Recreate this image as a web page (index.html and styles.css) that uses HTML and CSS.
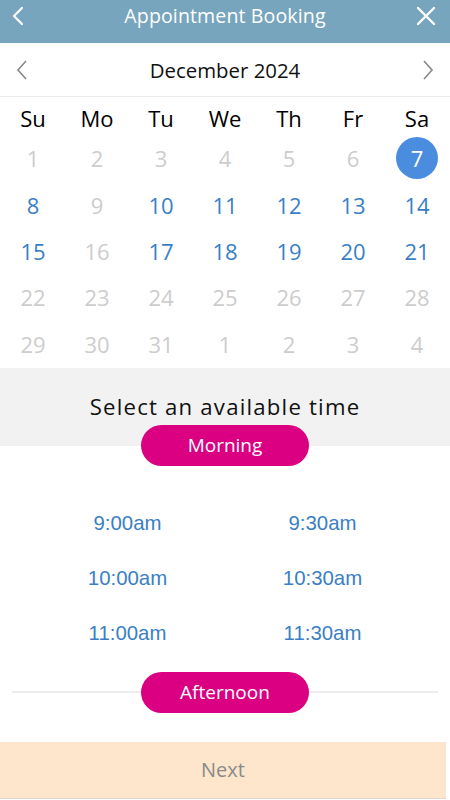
FILE: index.html
```html
<!DOCTYPE html>
<html lang="en">
<head>
<meta charset="utf-8">
<title>Appointment Booking</title>
<link rel="stylesheet" href="styles.css">
</head>
<body>
<div class="app">
  <header class="topbar">
    <svg class="top-icon back" width="16" height="20" viewBox="0 0 16 20"><path d="M12 2 L4 10 L12 18" fill="none" stroke="#fff" stroke-width="2.2" stroke-linecap="round" stroke-linejoin="round"/></svg>
    <h1 class="title">Appointment Booking</h1>
    <svg class="top-icon close" width="20" height="20" viewBox="0 0 20 20"><path d="M2 2 L18 18 M18 2 L2 18" stroke="#fff" stroke-width="2.4" stroke-linecap="round"/></svg>
  </header>

  <div class="month-nav">
    <svg width="14" height="22" viewBox="0 0 14 22"><path d="M11 2 L3 11 L11 20" fill="none" stroke="#888" stroke-width="1.6"/></svg>
    <span class="month">December 2024</span>
    <svg width="14" height="22" viewBox="0 0 14 22"><path d="M3 2 L11 11 L3 20" fill="none" stroke="#888" stroke-width="1.6"/></svg>
  </div>

  <div class="calendar">
    <div class="wd">Su</div><div class="wd">Mo</div><div class="wd">Tu</div><div class="wd">We</div><div class="wd">Th</div><div class="wd">Fr</div><div class="wd">Sa</div>

    <div class="day off">1</div><div class="day off">2</div><div class="day off">3</div><div class="day off">4</div><div class="day off">5</div><div class="day off">6</div><div class="day"><span class="sel">7</span></div>

    <div class="day on">8</div><div class="day off">9</div><div class="day on">10</div><div class="day on">11</div><div class="day on">12</div><div class="day on">13</div><div class="day on">14</div>

    <div class="day on">15</div><div class="day off">16</div><div class="day on">17</div><div class="day on">18</div><div class="day on">19</div><div class="day on">20</div><div class="day on">21</div>

    <div class="day off">22</div><div class="day off">23</div><div class="day off">24</div><div class="day off">25</div><div class="day off">26</div><div class="day off">27</div><div class="day off">28</div>

    <div class="day off">29</div><div class="day off">30</div><div class="day off">31</div><div class="day off">1</div><div class="day off">2</div><div class="day off">3</div><div class="day off">4</div>
  </div>

  <section class="times-head">
    <h2 class="times-title">Select an available time</h2>
  </section>
  <div class="pill-row first">
    <span class="pill">Morning</span>
  </div>

  <div class="slots">
    <div class="slot">9:00am</div><div class="slot">9:30am</div>
    <div class="slot">10:00am</div><div class="slot">10:30am</div>
    <div class="slot">11:00am</div><div class="slot">11:30am</div>
  </div>

  <div class="divider">
    <span class="line"></span>
    <span class="pill">Afternoon</span>
    <span class="line"></span>
  </div>

  <div class="next">Next</div>
</div>
</body>
</html>
```

FILE: styles.css
```css
* { box-sizing: border-box; }
html, body { margin: 0; padding: 0; }
body {
  background: #fff;
  font-family: "Open Sans", "Noto Sans", sans-serif;
  width: 450px;
  height: 800px;
  overflow: hidden;
}
.app { width: 450px; }

.topbar {
  height: 43px;
  background: #77a5bd;
  display: grid;
  grid-template-columns: 50px 1fr 50px;
  align-items: center;
  padding: 0 14px 11px 10px;
}
.title {
  margin: 0;
  font-size: 19.6px;
  font-weight: 400;
  color: #fff;
  letter-spacing: 0.1px;
  line-height: 26px;
  text-align: center;
  padding-left: 4px;
}
.top-icon { display: block; }
.top-icon.back { justify-self: start; }
.top-icon.close { justify-self: end; }

.month-nav {
  height: 54px;
  display: flex;
  align-items: center;
  justify-content: space-between;
  padding: 0 15px 0 15px;
  border-bottom: 1px solid #ebebeb;
}
.month {
  font-size: 20.4px;
  color: #111;
}

.calendar {
  display: grid;
  grid-template-columns: repeat(7, 64px);
  grid-template-rows: 38px repeat(5, 46.4px);
  padding: 0 1px;
}
.wd {
  display: flex;
  align-items: center;
  justify-content: center;
  font-size: 22px;
  color: #000;
  padding-top: 3px;
}
.day {
  display: flex;
  align-items: center;
  justify-content: center;
  font-size: 22px;
}
.day.off { color: #cdcdcd; }
.day.on { color: #3a7fc5; }
.sel {
  width: 42px;
  height: 42px;
  border-radius: 50%;
  background: #4a8ddf;
  color: #fff;
  display: flex;
  align-items: center;
  justify-content: center;
}

.times-head {
  margin-top: 1px;
  height: 78px;
  background: #f2f2f2;
  display: flex;
  justify-content: center;
  padding-top: 24px;
}
.times-title {
  margin: 0;
  font-size: 22.2px;
  font-weight: 400;
  letter-spacing: 1.2px;
  color: #111;
  line-height: 30px;
}
.pill-row {
  display: flex;
  justify-content: center;
  margin-top: -21px;
}
.pill {
  width: 168px;
  height: 41px;
  border-radius: 21px;
  background: #da0081;
  color: #fff;
  font-size: 19px;
  display: flex;
  align-items: center;
  justify-content: center;
}

.slots {
  display: grid;
  grid-template-columns: 195px 195px;
  grid-auto-rows: 55px;
  padding: 0 30px;
  margin-top: 30px;
}
.slot {
  display: flex;
  align-items: center;
  justify-content: center;
  font-family: "Liberation Sans", Arial, sans-serif;
  font-size: 20.4px;
  color: #3a7fc5;
}

.divider {
  display: flex;
  align-items: center;
  padding: 0 12px;
  margin-top: 11px;
}
.divider .line {
  flex: 1;
  height: 2px;
  background: #ececec;
}

.next {
  margin-top: 29px;
  width: 446px;
  height: 57px;
  background: #fde6cb;
  border-bottom: 1px solid #d6d6d6;
  display: flex;
  align-items: center;
  justify-content: center;
  font-size: 20px;
  color: #8a8a8a;
}
```
